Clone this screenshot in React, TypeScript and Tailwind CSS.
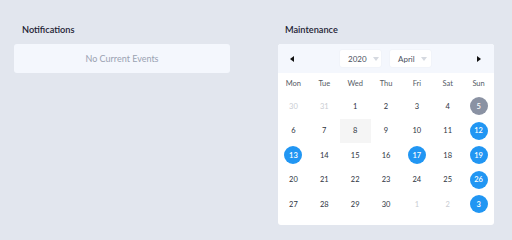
const weeks: { d: number; muted?: boolean; kind?: "gray" | "blue" | "today" }[][] = [
  [{ d: 30, muted: true }, { d: 31, muted: true }, { d: 1 }, { d: 2 }, { d: 3 }, { d: 4 }, { d: 5, kind: "gray" }],
  [{ d: 6 }, { d: 7 }, { d: 8, kind: "today" }, { d: 9 }, { d: 10 }, { d: 11 }, { d: 12, kind: "blue" }],
  [{ d: 13, kind: "blue" }, { d: 14 }, { d: 15 }, { d: 16 }, { d: 17, kind: "blue" }, { d: 18 }, { d: 19, kind: "blue" }],
  [{ d: 20 }, { d: 21 }, { d: 22 }, { d: 23 }, { d: 24 }, { d: 25 }, { d: 26, kind: "blue" }],
  [{ d: 27 }, { d: 28 }, { d: 29 }, { d: 30 }, { d: 1, muted: true }, { d: 2, muted: true }, { d: 3, kind: "blue" }],
];

const days = ["Mon", "Tue", "Wed", "Thu", "Fri", "Sat", "Sun"];

function Select({ label, width }: { label: string; width: string }) {
  return (
    <div className={`${width} h-[17px] bg-white rounded-[2px] shadow-[0_0_2px_rgba(0,0,0,0.06)] flex items-center pl-[8px] pr-[4px] gap-[6px]`}>
      <span className="text-[8px] text-[#4a5060]">{label}</span>
      <span className="ml-auto w-0 h-0 border-x-[3.5px] border-x-transparent border-t-[4px] border-t-[#d5d9e0]" />
    </div>
  );
}

export default function App() {
  return (
    <div
      className="w-[512px] h-[240px] bg-[#e2e6ee] flex pl-[14px] pt-[23px] gap-[48px]"
      style={{ fontFamily: "Lato, 'Noto Sans', sans-serif" }}
    >
      {/* Notifications */}
      <div className="w-[216px]">
        <div className="h-[14px] pl-[8px] text-[9.2px] leading-[14px] font-semibold text-[#1c2233] mb-[7px]">Notifications</div>
        <div className="h-[29px] bg-[#f4f7fd] rounded-[3px] flex items-center justify-center text-[9px] text-[#9aa2b2]">
          No Current Events
        </div>
      </div>

      {/* Maintenance */}
      <div className="w-[216px]">
        <div className="h-[14px] pl-[7px] text-[9.2px] leading-[14px] font-semibold text-[#1c2233] mb-[7px]">Maintenance</div>
        <div className="bg-white rounded-[3px] overflow-hidden pb-[8px]">
          <div className="h-[29px] bg-[#f4f7fd] flex items-center px-[12px]">
            <span className="w-0 h-0 border-y-[3px] border-y-transparent border-r-[4px] border-r-[#111]" />
            <div className="flex gap-[9px] ml-[46px]">
              <Select label="2020" width="w-[41px]" />
              <Select label="April" width="w-[41px]" />
            </div>
            <span className="ml-auto mr-[1px] w-0 h-0 border-y-[3px] border-y-transparent border-l-[4px] border-l-[#111]" />
          </div>
          <div className="grid grid-cols-7 h-[21px] items-center">
            {days.map((d) => (
              <div key={d} className="text-center text-[7.5px] text-[#555b66]">{d}</div>
            ))}
          </div>
          {weeks.map((w, i) => (
            <div key={i} className="grid grid-cols-7 h-[24.5px]">
              {w.map((c, j) => (
                <div
                  key={j}
                  className={`flex items-center justify-center text-[7.5px] ${c.kind === "today" ? "bg-[#f5f5f5]" : ""} ${c.muted ? "text-[#c9ccd2]" : "text-[#2e3440]"}`}
                >
                  {c.kind === "blue" || c.kind === "gray" ? (
                    <span
                      className={`w-[18px] h-[18px] rounded-full flex items-center justify-center text-white font-semibold ${c.kind === "blue" ? "bg-[#2196f3]" : "bg-[#8a92a3]"}`}
                    >
                      {c.d}
                    </span>
                  ) : (
                    c.d
                  )}
                </div>
              ))}
            </div>
          ))}
        </div>
      </div>
    </div>
  );
}
